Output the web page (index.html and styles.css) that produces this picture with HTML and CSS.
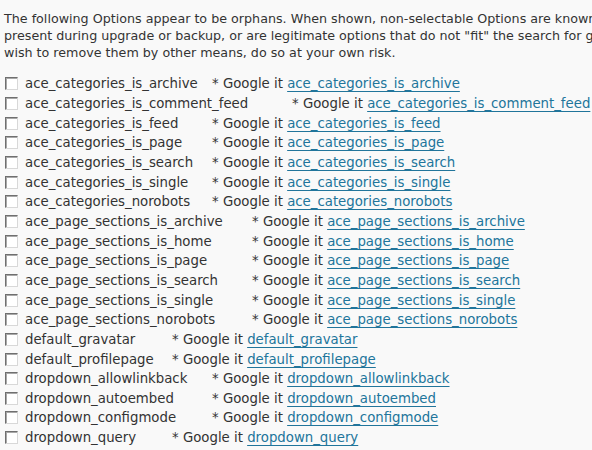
FILE: index.html
```html
<!DOCTYPE html>
<html>
<head>
<meta charset="utf-8">
<link rel="stylesheet" href="styles.css">
</head>
<body>
<div class="page">
  <div class="intro">
    <div class="line">The following Options appear to be orphans. When shown, non-selectable Options are known to be</div>
    <div class="line">present during upgrade or backup, or are legitimate options that do not "fit" the search for google.</div>
    <div class="line">wish to remove them by other means, do so at your own risk.</div>
  </div>
  <div class="list">
    <div class="row"><span class="cb"></span><span class="name s212">ace_categories_is_archive</span><span class="g">* Google it <a href="#">ace_categories_is_archive</a></span></div>
    <div class="row"><span class="cb"></span><span class="name s292">ace_categories_is_comment_feed</span><span class="g">* Google it <a href="#">ace_categories_is_comment_feed</a></span></div>
    <div class="row"><span class="cb"></span><span class="name s212">ace_categories_is_feed</span><span class="g">* Google it <a href="#">ace_categories_is_feed</a></span></div>
    <div class="row"><span class="cb"></span><span class="name s212">ace_categories_is_page</span><span class="g">* Google it <a href="#">ace_categories_is_page</a></span></div>
    <div class="row"><span class="cb"></span><span class="name s212">ace_categories_is_search</span><span class="g">* Google it <a href="#">ace_categories_is_search</a></span></div>
    <div class="row"><span class="cb"></span><span class="name s212">ace_categories_is_single</span><span class="g">* Google it <a href="#">ace_categories_is_single</a></span></div>
    <div class="row"><span class="cb"></span><span class="name s212">ace_categories_norobots</span><span class="g">* Google it <a href="#">ace_categories_norobots</a></span></div>
    <div class="row"><span class="cb"></span><span class="name s252">ace_page_sections_is_archive</span><span class="g">* Google it <a href="#">ace_page_sections_is_archive</a></span></div>
    <div class="row"><span class="cb"></span><span class="name s252">ace_page_sections_is_home</span><span class="g">* Google it <a href="#">ace_page_sections_is_home</a></span></div>
    <div class="row"><span class="cb"></span><span class="name s252">ace_page_sections_is_page</span><span class="g">* Google it <a href="#">ace_page_sections_is_page</a></span></div>
    <div class="row"><span class="cb"></span><span class="name s252">ace_page_sections_is_search</span><span class="g">* Google it <a href="#">ace_page_sections_is_search</a></span></div>
    <div class="row"><span class="cb"></span><span class="name s252">ace_page_sections_is_single</span><span class="g">* Google it <a href="#">ace_page_sections_is_single</a></span></div>
    <div class="row"><span class="cb"></span><span class="name s252">ace_page_sections_norobots</span><span class="g">* Google it <a href="#">ace_page_sections_norobots</a></span></div>
    <div class="row"><span class="cb"></span><span class="name s172">default_gravatar</span><span class="g">* Google it <a href="#">default_gravatar</a></span></div>
    <div class="row"><span class="cb"></span><span class="name s172">default_profilepage</span><span class="g">* Google it <a href="#">default_profilepage</a></span></div>
    <div class="row"><span class="cb"></span><span class="name s212">dropdown_allowlinkback</span><span class="g">* Google it <a href="#">dropdown_allowlinkback</a></span></div>
    <div class="row"><span class="cb"></span><span class="name s212">dropdown_autoembed</span><span class="g">* Google it <a href="#">dropdown_autoembed</a></span></div>
    <div class="row"><span class="cb"></span><span class="name s212">dropdown_configmode</span><span class="g">* Google it <a href="#">dropdown_configmode</a></span></div>
    <div class="row"><span class="cb"></span><span class="name s172">dropdown_query</span><span class="g">* Google it <a href="#">dropdown_query</a></span></div>
  </div>
</div>
</body>
</html>
```
FILE: styles.css
```css
html, body {
  margin: 0;
  padding: 0;
  background: #f9f9f9;
  overflow: hidden;
}
.page {
  width: 592px;
  height: 450px;
  overflow: hidden;
  font-family: "DejaVu Sans", Verdana, sans-serif;
  color: #333333;
  padding: 10px 0 0 4px;
  box-sizing: border-box;
}
.intro {
  font-size: 12.7px;
}
.intro .line {
  white-space: nowrap;
  line-height: 17px;
}
.list {
  margin-top: 13px;
  font-size: 13.3px;
}
.row {
  display: flex;
  align-items: center;
  height: 19.67px;
  white-space: nowrap;
}
.cb {
  flex: none;
  width: 11px;
  height: 11px;
  margin: 0 7px 0 1px;
  background: #fff;
  border-top: 1px solid #6f6f6f;
  border-left: 1px solid #6f6f6f;
  border-right: 1px solid #d8d8d8;
  border-bottom: 1px solid #d8d8d8;
  box-shadow: inset 1px 1px 0 #a8a8a8;
}
.name {
  flex: none;
}
.s172 { width: 147px; }
.s212 { width: 187px; }
.s252 { width: 227px; }
.s292 { width: 267px; }
.g a {
  color: #21759b;
  text-decoration: underline;
  text-decoration-thickness: 1px;
  text-underline-offset: 3px;
}
```
